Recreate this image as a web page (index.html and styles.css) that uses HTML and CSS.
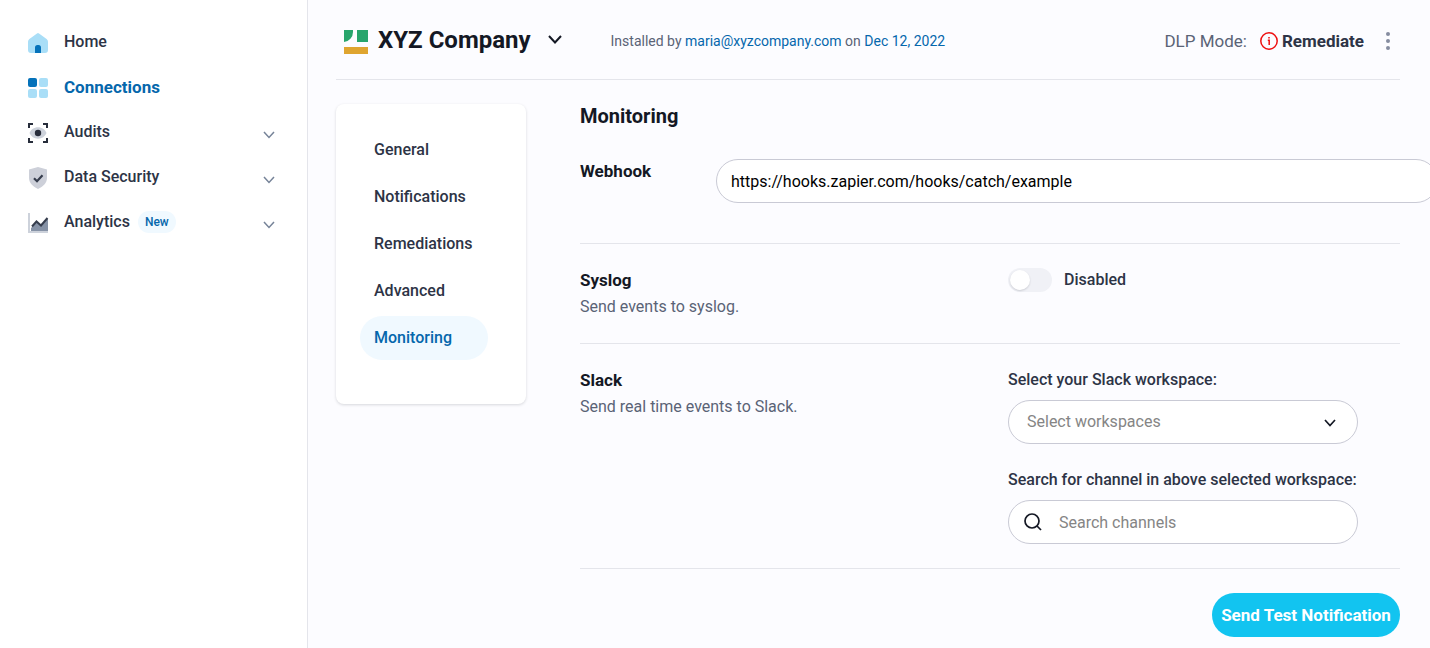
FILE: index.html
```
<!DOCTYPE html>
<html lang="en">
<head>
  <meta charset="UTF-8" />
  <meta name="viewport" content="width=device-width, initial-scale=1.0"/>
  <title>XYZ Company - Monitoring</title>
  <link rel="stylesheet" href="styles.css">
</head>
<body>
  <aside class="sidebar">
    <nav class="main-nav">
      <a href="#" class="nav-item">
        <svg class="nav-icon" viewBox="0 0 20 20">
          <path d="M9 .4a1.6 1.6 0 0 1 2 0l7.600 5.600A3.500 3.500 0 0 1 20 8.800V17a3 3 0 0 1-3 3H3a3 3 0 0 1-3-3V8.800A3.500 3.500 0 0 1 1.400 6z" fill="#a9def7"/>
          <path d="M7 20v-5.500a2.500 2.500 0 0 1 2.500-2.500h1a2.500 2.500 0 0 1 2.500 2.500V20z" fill="#0572ba"/>
        </svg>
        <span>Home</span>
      </a>
      <a href="#" class="nav-item active">
        <svg class="nav-icon" viewBox="0 0 20 20">
          <rect width="9" height="9" rx="2" fill="#0572ba"/>
          <rect x="11" width="9" height="9" rx="2" fill="#a9def7"/>
          <rect y="11" width="9" height="9" rx="2" fill="#a9def7"/>
          <rect x="11" y="11" width="9" height="9" rx="2" fill="#a9def7"/>
        </svg>
        <span>Connections</span>
      </a>
      <a href="#" class="nav-item">
        <svg class="nav-icon" viewBox="0 0 20 20">
          <path d="M1 5V1h4M15 1h4v4M19 15v4h-4M5 19H1v-4" fill="none" stroke="#272d3b" stroke-width="2"/>
          <path d="M1.500 10C3 6.500 6 4.300 10 4.300s7 2.200 8.500 5.700c-1.500 3.500-4.500 5.700-8.500 5.700S3 13.500 1.500 10z" fill="#cdd2db"/>
          <circle cx="10" cy="10" r="3.200" fill="#272d3b"/>
        </svg>
        <span>Audits</span>
        <svg class="nav-chevron" viewBox="0 0 12 8"><path d="M1 1l5 5.500L11 1"/></svg>
      </a>
      <a href="#" class="nav-item">
        <svg class="nav-icon" viewBox="0 0 20 20">
          <path d="M10-1l9 2.500v8.500c0 5-4 8.800-9 11-5-2.200-9-6-9-11V1.500z" fill="#cdd0d9"/>
          <path d="M6 10.200l3 3 5.500-6" fill="none" stroke="#363d4d" stroke-width="2.200"/>
        </svg>
        <span>Data Security</span>
        <svg class="nav-chevron" viewBox="0 0 12 8"><path d="M1 1l5 5.500L11 1"/></svg>
      </a>
      <a href="#" class="nav-item">
        <svg class="nav-icon" viewBox="0 0 20 20">
          <path d="M0 0h2v18h18v2H0z" fill="#cdd2db"/>
          <path d="M3 18v-3l6-6 4 3.500 7-7V18z" fill="#8692a6"/>
          <path d="M4 13.500l4.500-5 4.500 4 6.500-7.500" fill="none" stroke="#363d4d" stroke-width="2"/>
        </svg>
        <span>Analytics</span>
        <span class="badge">New</span>
        <svg class="nav-chevron" viewBox="0 0 12 8"><path d="M1 1l5 5.500L11 1"/></svg>
      </a>
    </nav>
  </aside>

  <main class="content">
    <header class="topbar">
      <button type="button" class="company">
        <svg class="logo" viewBox="0 0 24 24">
          <path d="M0 0h9v2a10 10 0 0 1-9 10z" fill="#28a56c"/>
          <path d="M13 0h11v12H13z" fill="#28a56c"/>
          <path d="M0 17h24v7H0z" fill="#dfa530"/>
        </svg>
        <span>XYZ Company</span>
        <svg class="company-chevron" viewBox="0 0 14 9"><path d="M1 1l6 6.500L13 1"/></svg>
      </button>
      <p class="installed">Installed by <a href="#">maria@xyzcompany.com</a> on <a href="#">Dec 12, 2022</a></p>
      <div class="dlp">
        <span class="dlp-label">DLP Mode:</span>
        <svg class="info" viewBox="0 0 18 18">
          <circle cx="9" cy="9" r="8.200"/>
          <path d="M7.800 8.200h1.400V13M9 5v1.600"/>
        </svg>
        <strong>Remediate</strong>
        <button type="button" class="more" aria-label="More options">
          <svg viewBox="0 0 4 18"><circle cx="2" cy="2" r="2"/><circle cx="2" cy="9" r="2"/><circle cx="2" cy="16" r="2"/></svg>
        </button>
      </div>
    </header>

    <div class="layout">
      <nav class="settings-nav">
        <a href="#">General</a>
        <a href="#">Notifications</a>
        <a href="#">Remediations</a>
        <a href="#">Advanced</a>
        <a href="#" class="selected">Monitoring</a>
      </nav>

      <section class="settings">
        <h1>Monitoring</h1>

        <div class="row webhook">
          <label for="webhook">Webhook</label>
          <input type="text" id="webhook" class="field" value="https://hooks.zapier.com/hooks/catch/example">
        </div>

        <div class="row split">
          <div>
            <h2>Syslog</h2>
            <p class="desc">Send events to syslog.</p>
          </div>
          <label class="switch">
            <input type="checkbox">
            <span>Disabled</span>
          </label>
        </div>

        <div class="row split">
          <div>
            <h2>Slack</h2>
            <p class="desc">Send real time events to Slack.</p>
          </div>
          <div class="form">
            <label for="workspace">Select your Slack workspace:</label>
            <div class="control">
              <select id="workspace" class="field">
                <option>Select workspaces</option>
              </select>
              <svg class="select-chevron" viewBox="0 0 12 8"><path d="M1 1l5 5.500L11 1"/></svg>
            </div>
            <label for="channel">Search for channel in above selected workspace:</label>
            <div class="control">
              <svg class="search-icon" viewBox="0 0 18 18"><circle cx="8" cy="8" r="7"/><path d="M13 13l4 4"/></svg>
              <input type="text" id="channel" class="field search" placeholder="Search channels">
            </div>
          </div>
        </div>

        <div class="actions">
          <button type="button" class="primary">Send Test Notification</button>
        </div>
      </section>
    </div>
  </main>
</body>
</html>
```

FILE: styles.css
```
* {
  box-sizing: border-box;
}

body {
  margin: 0;
  display: flex;
  min-height: 100vh;
  font-family: Roboto, "Liberation Sans", sans-serif;
  font-size: 16px;
  line-height: 24px;
  color: #2d3446;
  background: #fcfcff;
  overflow-x: hidden;
}

a {
  color: #0567ac;
  text-decoration: none;
}

svg {
  flex: none;
  overflow: visible;
}

button,
input,
select {
  font: inherit;
}

/* Sidebar */
.sidebar {
  flex: none;
  width: 308px;
  padding: 19px 32px 19px 28px;
  background: #fff;
  border-right: 1px solid #e4e5eb;
}

.nav-item {
  display: flex;
  align-items: center;
  height: 45px;
  color: #2d3446;
  font-weight: 500;
}

.nav-item.active {
  color: #0567ac;
  font-size: 17px;
  font-weight: 700;
}

.nav-icon {
  width: 20px;
  height: 20px;
  margin: 3px 16px 0 0;
}

.nav-chevron {
  width: 12px;
  height: 8px;
  margin: 6px 0 0 auto;
}

.nav-chevron path {
  fill: none;
  stroke: #768398;
  stroke-width: 1.5;
}

.badge {
  margin-left: 8px;
  padding: 0 7px;
  font-size: 12px;
  line-height: 22px;
  font-weight: 500;
  color: #0567ac;
  background: #f0f9ff;
  border-radius: 11px;
}

/* Header */
.content {
  flex: 1;
  min-width: 0;
  padding: 0 30px 0 28px;
}

.topbar {
  display: flex;
  align-items: center;
  height: 80px;
  border-bottom: 1px solid #e4e5eb;
}

.company {
  display: flex;
  align-items: center;
  padding: 0 0 0 8px;
  font-size: 24px;
  line-height: 32px;
  font-weight: 700;
  color: #141824;
  background: none;
  border: none;
  cursor: pointer;
}

.logo {
  width: 24px;
  height: 24px;
  margin: 4px 10px 0 0;
}

.company-chevron {
  width: 14px;
  height: 9px;
  margin-left: 17px;
}

.company-chevron path {
  fill: none;
  stroke: #141824;
  stroke-width: 2;
}

.installed {
  margin: 2px 0 0 49px;
  font-size: 14px;
  color: #5a6376;
}

.dlp {
  display: flex;
  align-items: center;
  margin: 2px 0 0 auto;
  font-size: 17px;
  color: #2d3446;
}

.dlp-label {
  color: #5a6376;
}

.info {
  width: 18px;
  height: 18px;
  margin: 0 4px 0 13px;
  fill: none;
  stroke: #ee1111;
  stroke-width: 1.5;
}

.more {
  display: flex;
  margin-left: 12px;
  padding: 4px 10px;
  background: none;
  border: none;
  cursor: pointer;
}

.more svg {
  width: 4px;
  height: 18px;
  fill: #858ca0;
}

/* Settings */
.layout {
  display: flex;
  align-items: flex-start;
  gap: 54px;
  padding-top: 24px;
}

.settings-nav {
  display: flex;
  flex: none;
  flex-direction: column;
  gap: 3px;
  width: 190px;
  padding: 24px 38px 44px 24px;
  background: #fff;
  border-radius: 8px;
  box-shadow: 0 1px 3px rgba(20, 24, 36, 0.16);
}

.settings-nav a {
  padding: 10px 14px;
  color: #2d3446;
  font-weight: 500;
  border-radius: 22px;
}

.settings-nav .selected {
  color: #0567ac;
  background: #f0f9ff;
}

.settings {
  flex: 1;
  min-width: 0;
}

h1,
h2,
p {
  margin: 0;
}

h1 {
  font-size: 20px;
  line-height: 24px;
  color: #141824;
}

h2 {
  font-size: 17px;
  line-height: 24px;
  color: #141824;
}

.row {
  padding: 24px 0;
  border-bottom: 1px solid #e4e5eb;
}

.desc {
  margin-top: 3px;
  color: #5a6376;
}

.field {
  display: block;
  width: 100%;
  height: 44px;
  padding: 0 14px;
  color: #000;
  background: #fff;
  border: 1px solid #c9cad5;
  border-radius: 22px;
  outline-color: #12c4f0;
}

.webhook {
  display: flex;
  padding: 31px 0 40px;
}

.webhook label {
  flex: none;
  width: 136px;
  font-size: 17px;
  font-weight: 700;
  color: #141824;
}

/* the webhook box runs past the right page padding */
.webhook .field {
  flex: 1;
  margin-right: -38px;
}

.split {
  display: grid;
  grid-template-columns: 1fr 392px;
}

.switch {
  display: flex;
  align-items: flex-start;
  gap: 12px;
  font-weight: 500;
}

.switch input {
  appearance: none;
  width: 44px;
  height: 24px;
  margin: 0;
  padding: 2px;
  background: #f0f1f6;
  border-radius: 12px;
  cursor: pointer;
}

.switch input::before {
  content: "";
  display: block;
  width: 20px;
  height: 20px;
  background: #fff;
  border-radius: 50%;
  box-shadow: 0 1px 2px rgba(20, 24, 36, 0.16);
}

.switch input:checked {
  background: #12c4f0;
}

.switch input:checked::before {
  margin-left: 20px;
}

.form label {
  display: block;
  margin-bottom: 8px;
  font-weight: 500;
}

.control {
  position: relative;
  width: 350px;
  margin-bottom: 24px;
}

.control:last-child {
  margin-bottom: 0;
}

select.field {
  appearance: none;
  padding: 0 18px;
  color: #858585;
}

.select-chevron {
  position: absolute;
  top: 19px;
  right: 22px;
  width: 12px;
  height: 8px;
  fill: none;
  stroke: #141824;
  stroke-width: 1.7;
  pointer-events: none;
}

.search-icon {
  position: absolute;
  top: 13px;
  left: 16px;
  width: 18px;
  height: 18px;
  fill: none;
  stroke: #141824;
  stroke-width: 1.7;
}

.search {
  padding-left: 50px;
}

.search::placeholder {
  color: #858585;
}

.actions {
  display: flex;
  justify-content: flex-end;
  padding: 24px 0 11px;
}

.primary {
  height: 44px;
  width: 188px;
  padding: 0;
  font-size: 17px;
  font-weight: 700;
  color: #fff;
  background: #12c4f0;
  border: none;
  border-radius: 22px;
  cursor: pointer;
}
```
